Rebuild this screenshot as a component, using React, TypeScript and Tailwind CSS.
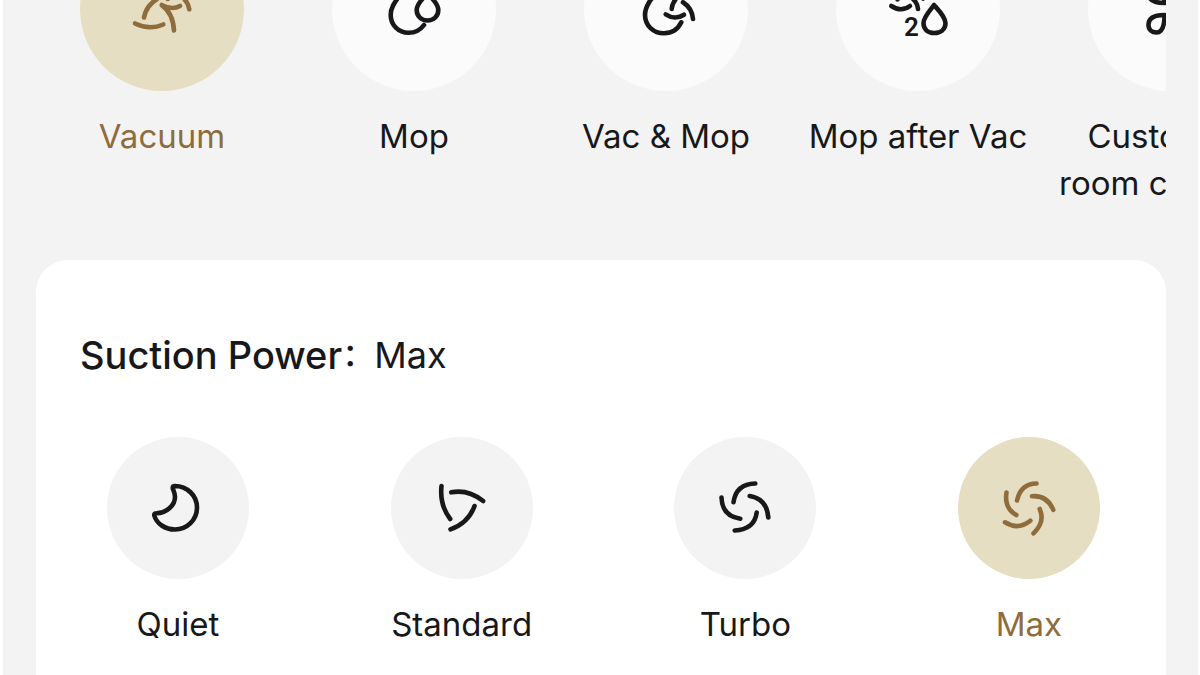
import { useState } from "react";
import type { ReactNode } from "react";
import clsx from "clsx";

type Option = {
  id: string;
  label: string;
  icon: ReactNode;
};

const modes: Option[] = [
  {
    id: "vacuum",
    label: "Vacuum",
    icon: (
      <>
        <path d="M9 50.5Q23.5 57.5 37.3 51.5" />
        <path d="M18 44.5Q20 33 31 26" />
        <path d="M41.7 26V24" />
        <path d="M54 33Q46 37.5 35.7 32Q47 40 48 57.5" />
        <path d="M63.3 36.3Q62 28 54 22" />
      </>
    ),
  },
  {
    id: "mop",
    label: "Mop",
    icon: (
      <>
        <path d="M46 52C42 57.5 36.5 59.8 30.5 59.8C20.5 59.8 12.7 52 12.7 42C12.7 33 18 28 27 15" />
        <path d="M49.5 20C46 25 38.7 30 38.7 37C38.7 43.5 43.5 47.5 49.5 47.5C55.5 47.5 60.3 43.5 60.3 37C60.3 30 53 25 49.5 20Z" />
      </>
    ),
  },
  {
    id: "vac-mop",
    label: "Vac & Mop",
    icon: (
      <>
        <path d="M51.3 49.3C48 56 42 60.3 34 60.3C23.500 60.3 15 52.5 15 42C15 33 21 26 30 15" />
        <path d="M35.7 41.3Q45 47.5 54 41.7" />
        <path d="M41.7 36Q42 30 48 23" />
        <path d="M53 29.3Q62 35 63 46" />
      </>
    ),
  },
  {
    id: "mop-after-vac",
    label: "Mop after Vac",
    icon: (
      <>
        <path d="M9.3 33Q19 39.5 28 33" />
        <path d="M15.5 26.5V24M41 25.500L39 24" />
        <path d="M31 26Q35.5 30 36 36" />
        <path d="M52 32C49 36.5 41.5 44 41.5 50C41.5 56.5 46 60 52.3 60C58.5 60 63.5 56.5 63.5 50C63.5 44 56 36.5 52 32Z" />
        <text
          x="22"
          y="63"
          className="font-[Roboto,sans-serif] text-[26px] font-semibold"
          fill="currentColor"
          stroke="none"
        >
          2
        </text>
      </>
    ),
  },
  {
    id: "customize",
    label: "Customize room cleaning",
    icon: (
      <>
        <path d="M30.5 42C22 42 14.500 44.500 14.500 52C14.500 56.500 18 59.500 22.500 59.500C29 59.500 30.500 52 30.500 42Z" />
        <path d="M30.5 30C22 30 14.500 27.500 14.500 20C14.500 15.500 18 12.500 22.500 12.500C29 12.500 30.500 20 30.500 30Z" />
        <path d="M41.5 42C50 42 57.500 44.500 57.500 52C57.500 56.500 54 59.500 49.500 59.500C43 59.500 41.500 52 41.500 42Z" />
        <path d="M41.5 30C50 30 57.500 27.500 57.500 20C57.500 15.500 54 12.500 49.500 12.500C43 12.500 41.500 20 41.500 30Z" />
      </>
    ),
  },
];

const suctionLevels: Option[] = [
  {
    id: "quiet",
    label: "Quiet",
    icon: (
      <path d="M33 14C45 14 55 23.5 55 35.5C55 48 45 57.5 33 57.5C23 57.5 14.5 51.5 12.3 43.5Q11.8 41.3 14.5 41.3C25 41 33 33 33 25C33 20 31 18.5 30.7 16Q30.7 14 33 14Z" />
    ),
  },
  {
    id: "standard",
    label: "Standard",
    icon: (
      <>
        <path d="M15.5 14Q13.5 33 24.2 47" />
        <path d="M25.2 20.3Q42 17 57.2 29" />
        <path d="M48.5 34Q42.5 51 24.5 57.3" />
      </>
    ),
  },
  {
    id: "turbo",
    label: "Turbo",
    icon: (
      <>
        <path d="M46.3 11.5Q27 12 24.5 30.3" />
        <path d="M40.7 24Q58 27 59.3 45.5" />
        <path d="M47.7 40.5Q45.5 57.5 25.7 58.5" />
        <path d="M12.5 25.5Q13 44 31.3 46.7" />
      </>
    ),
  },
  {
    id: "max",
    label: "Max",
    icon: (
      <>
        <path d="M43.5 11.5Q27.5 12 24 28.5" />
        <path d="M39 24.2Q54 23 60.3 37.8" />
        <path d="M46.7 37Q52.5 50 40.5 61.3" />
        <path d="M37.3 48.7Q25 58.5 12 50.3" />
        <path d="M13.5 20.5Q11 36 23.3 43" />
      </>
    ),
  },
];

function OptionIcon({ children }: { children: ReactNode }) {
  return (
    <svg
      viewBox="0 0 72 72"
      className="size-[72px]"
      fill="none"
      stroke="currentColor"
      strokeWidth="4.6"
      strokeLinecap="round"
      strokeLinejoin="round"
      aria-hidden="true"
    >
      {children}
    </svg>
  );
}

type OptionButtonProps = {
  option: Option;
  active: boolean;
  className: string;
  circleClassName: string;
  onSelect: (id: string) => void;
};

function OptionButton({
  option,
  active,
  className,
  circleClassName,
  onSelect,
}: OptionButtonProps) {
  return (
    <button
      type="button"
      aria-pressed={active}
      onClick={() => onSelect(option.id)}
      className={clsx(
        "flex shrink-0 flex-col items-center gap-[22px]",
        active ? "text-[#8f6c3c]" : "text-[#18181a]",
        className
      )}
    >
      <span
        className={clsx(
          "flex items-center justify-center rounded-full",
          circleClassName,
          active && "bg-[#e6dec2]"
        )}
      >
        <OptionIcon>{option.icon}</OptionIcon>
      </span>
      <span className="text-[33px] leading-[47px]">{option.label}</span>
    </button>
  );
}

export default function App() {
  const [mode, setMode] = useState("vacuum");
  const [suction, setSuction] = useState("max");
  const currentSuction = suctionLevels.find((level) => level.id === suction);

  return (
    <div className="h-screen overflow-hidden bg-white pr-[2px] pl-[3px] font-[Inter,'Noto_Sans_CJK_SC',sans-serif]">
      {/* page is scrolled a little, so the mode circles start above the window */}
      <main className="-mt-[73px] bg-[#f3f3f3] pr-8 pl-[33px] text-[#18181a]">
        <div className="flex items-start overflow-hidden">
          {modes.map((item) => (
            <OptionButton
              key={item.id}
              option={item}
              active={mode === item.id}
              className="w-[252px] px-3"
              circleClassName={clsx(
                "size-[164px]",
                mode !== item.id && "bg-[#fbfbfb]"
              )}
              onSelect={setMode}
            />
          ))}
        </div>

        <section className="mt-[53px] rounded-t-[32px] bg-white pt-[71px] pb-12">
          <h2 className="flex px-11 leading-[48px]">
            <span className="text-[38px] font-medium">Suction Power</span>
            <span className="text-[32px] font-medium">：</span>
            <span className="text-[36px] font-normal">
              {currentSuction?.label}
            </span>
          </h2>
          <div className="mt-[58px] flex justify-between pr-[66px] pl-[71px]">
            {suctionLevels.map((item) => (
              <OptionButton
                key={item.id}
                option={item}
                active={suction === item.id}
                className="w-[142px]"
                circleClassName={clsx(
                  "size-[142px]",
                  suction !== item.id && "bg-[#f3f3f3]"
                )}
                onSelect={setSuction}
              />
            ))}
          </div>
        </section>
      </main>
    </div>
  );
}
